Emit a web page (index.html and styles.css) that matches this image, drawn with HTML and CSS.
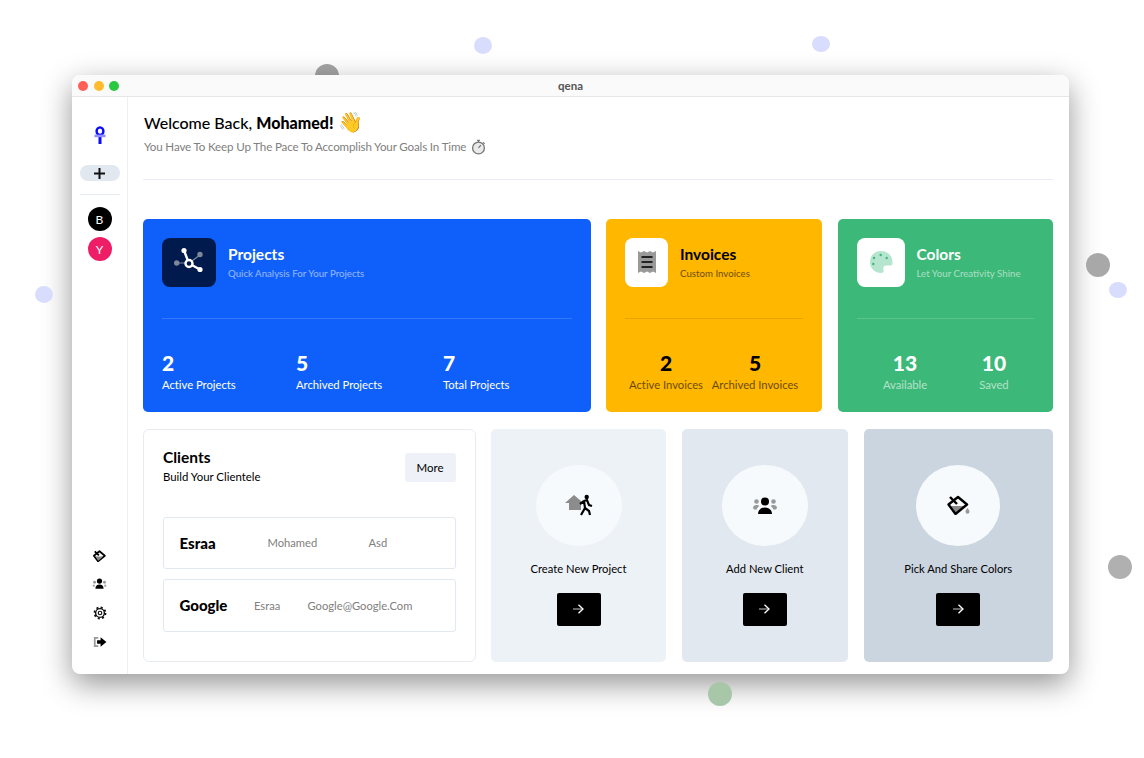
FILE: index.html
```html
<!DOCTYPE html>
<html lang="en">
<head>
<meta charset="UTF-8">
<meta name="viewport" content="width=device-width, initial-scale=1.0">
<title>qena</title>
<link rel="stylesheet" href="styles.css">
</head>
<body>
<!-- This one sits behind the window -->
<span class="dot d1"></span>

<div class="window">
  <div class="titlebar">
    <div class="lights"><i class="red"></i><i class="yellow"></i><i class="lime"></i></div>
    <div class="title">qena</div>
  </div>
  <div class="app">
    <!-- Sidebar -->
    <aside class="sidebar">
      <svg class="logo" width="12" height="18" viewBox="0 0 12 18"><ellipse cx="6" cy="5.2" rx="3.4" ry="3.8" fill="none" stroke="#0a0aff" stroke-width="2.4"/><rect x="4.5" y="9" width="3" height="9" fill="#0a0aff"/><rect x=".5" y="8.6" width="11" height="2.6" fill="#8f8fff"/></svg>
      <button class="add-btn"><svg width="11" height="11" viewBox="0 0 11 11"><path d="M0 5.5h11M5.5 0v11" stroke="#111" stroke-width="2"/></svg></button>
      <div class="side-line"></div>
      <div class="avatar black">B</div>
      <div class="avatar pink">Y</div>
      <div class="side-icons">
        <svg width="13" height="12" viewBox="0 0 22 20"><path d="M11 2l9 7.500L8.500 19 1.500 9.500z" fill="none" stroke="#000" stroke-width="3" stroke-linejoin="round"/><path d="M4 11h13l-8 7z" fill="#888"/><path d="M3 2l7 7" stroke="#000" stroke-width="3"/></svg>
        <svg width="15" height="14" viewBox="0 0 24 24"><circle cx="12" cy="7" r="4.5"/><path d="M5 20c0-5 3-7 7-7s7 2 7 7z"/><circle cx="3.500" cy="9" r="2.500" fill="#999"/><circle cx="20.500" cy="9" r="2.500" fill="#999"/><path d="M0 16c0-2 2-3 3.500-3v4zM24 16c0-2-2-3-3.500-3v4z" fill="#999"/></svg>
        <svg width="14" height="14" viewBox="0 0 24 24"><circle cx="12" cy="12" r="7.500" fill="none" stroke="#111" stroke-width="2.400"/><circle cx="12" cy="12" r="9.500" fill="none" stroke="#111" stroke-width="3" stroke-dasharray="3.500 3.960"/><circle cx="12" cy="12" r="3" fill="none" stroke="#111" stroke-width="2"/></svg>
        <svg width="14" height="14" viewBox="0 0 24 24"><path d="M9 5H3v14h6" fill="none" stroke="#999" stroke-width="3"/><path d="M13 4l10 8-10 8v-5H7V9h6z"/></svg>
      </div>
    </aside>

    <main class="content">
      <header class="welcome">
        <h1>Welcome Back, <b>Mohamed!</b> <span class="wave">👋</span></h1>
        <p>You Have To Keep Up The Pace To Accomplish Your Goals In Time
          <svg class="timer" width="15" height="16" viewBox="0 0 16 17"><circle cx="8" cy="9.5" r="6.3" fill="#eaeaea" stroke="#777" stroke-width="1.400"/><path d="M8 9.500l2.500-3M6.500 1.500h3M8 1.500v2M13 3.500l1.500 1.500" stroke="#777" stroke-width="1.300" fill="none"/></svg>
        </p>
      </header>

      <!-- Stat cards -->
      <section class="stats">
        <div class="card blue">
          <div class="card-head">
            <div class="icon-box navy">
              <svg width="32" height="32" viewBox="0 0 32 32"><circle cx="3.700" cy="17" r="2.700" fill="#7f8799"/><circle cx="27" cy="8.500" r="2.700" fill="#7f8799"/><path d="M4 17h12M16 17l11-8" stroke="#7f8799" stroke-width="1.200"/><path d="M11 4.500l5 13 11 6" stroke="#fff" stroke-width="2.400" fill="none"/><circle cx="11" cy="4.500" r="2.600" fill="#fff"/><circle cx="27" cy="23.500" r="2.600" fill="#fff"/><circle cx="16" cy="17.500" r="3.500" fill="#001a4d" stroke="#fff" stroke-width="2.400"/></svg>
            </div>
            <div><h3>Projects</h3><p>Quick Analysis For Your Projects</p></div>
          </div>
          <div class="card-rule"></div>
          <div class="card-nums">
            <div class="num n1"><strong>2</strong><span>Active Projects</span></div>
            <div class="num n2"><strong>5</strong><span>Archived Projects</span></div>
            <div class="num"><strong>7</strong><span>Total Projects</span></div>
          </div>
        </div>
        <div class="card yellow">
          <div class="card-head">
            <div class="icon-box white sm">
              <svg width="18" height="24" viewBox="0 0 18 24"><path d="M0 1l3 1.500L6 1l3 1.500L12 1l3 1.500L18 1v22l-3-1.500-3 1.500-3-1.500L6 23l-3-1.500L0 23z" fill="#999"/><path d="M3.500 7h11M3.500 12h11M3.500 17h11" stroke="#222" stroke-width="2"/></svg>
            </div>
            <div><h3>Invoices</h3><p>Custom Invoices</p></div>
          </div>
          <div class="card-rule"></div>
          <div class="card-nums pair">
            <div class="num"><strong>2</strong><span>Active Invoices</span></div>
            <div class="num"><strong>5</strong><span>Archived Invoices</span></div>
          </div>
        </div>
        <div class="card emerald">
          <div class="card-head">
            <div class="icon-box white md">
              <svg width="24" height="24" viewBox="0 0 24 24"><path d="M12 1C5.500 1 1 5.500 1 12s5 11 11 11c2.500 0 3-1.500 2.500-3-.8-2.500.2-4.500 3-4.500H22c1 0 1.500-1 1.500-3C23.500 5 18 1 12 1z" fill="#b5e5cf"/><circle cx="5" cy="8" r="1.200" fill="#3cb878"/><circle cx="11.700" cy="5" r="1.200" fill="#3cb878"/><circle cx="17.700" cy="8" r="1.200" fill="#3cb878"/><circle cx="4.300" cy="14" r="1.200" fill="#3cb878"/></svg>
            </div>
            <div><h3>Colors</h3><p>Let Your Creativity Shine</p></div>
          </div>
          <div class="card-rule"></div>
          <div class="card-nums pair">
            <div class="num"><strong>13</strong><span>Available</span></div>
            <div class="num"><strong>10</strong><span>Saved</span></div>
          </div>
        </div>
      </section>

      <section class="lower">
        <div class="clients">
          <div class="clients-head">
            <div><h3>Clients</h3><p>Build Your Clientele</p></div>
            <button class="more">More</button>
          </div>
          <div class="client first"><b>Esraa</b><span class="c-mid">Mohamed</span><span>Asd</span></div>
          <div class="client"><b>Google</b><span class="c-mid">Esraa</span><span>Google@Google.Com</span></div>
        </div>

        <div class="action a1">
          <div class="circle"><svg width="28" height="22" viewBox="0 0 28 22"><path d="M0 9L9 1l7 6v9H4V9z" fill="#8c8c8c"/><circle cx="21.700" cy="3" r="2.200"/><path d="M19 7l3-1 2 5 3 1M19 7l-4 3M19 7l1 7-4 7M20 14l4 3 1 4" stroke="#000" stroke-width="2.200" fill="none"/></svg></div>
          <div class="action-label">Create New Project</div>
          <button class="go"><svg width="11" height="10" viewBox="0 0 11 10"><path d="M0 5h9" stroke="#999" stroke-width="1.300"/><path d="M5.500 .7L10 5 5.500 9.300" stroke="#fff" stroke-width="1.300" fill="none"/></svg></button>
        </div>
        <div class="action a2">
          <div class="circle"><svg width="24" height="17" viewBox="0 0 24 17"><circle cx="12" cy="4.500" r="4"/><path d="M5 17c0-4 3-6.500 7-6.500s7 2.500 7 6.500z"/><circle cx="3.500" cy="4.500" r="2.300" fill="#999"/><circle cx="20.500" cy="4.500" r="2.300" fill="#999"/><path d="M0 11c0-2 1.500-3 3.500-3 1.200 0 2.200.3 2.800 1-1.300.8-2 1.800-2.500 3.500H1zM24 11c0-2-1.500-3-3.500-3-1.200 0-2.200.3-2.800 1 1.300.8 2 1.800 2.500 3.500H23z" fill="#999"/></svg></div>
          <div class="action-label">Add New Client</div>
          <button class="go"><svg width="11" height="10" viewBox="0 0 11 10"><path d="M0 5h9" stroke="#999" stroke-width="1.300"/><path d="M5.500 .7L10 5 5.500 9.300" stroke="#fff" stroke-width="1.300" fill="none"/></svg></button>
        </div>
        <div class="action a3">
          <div class="circle"><svg width="23" height="20" viewBox="0 0 23 20"><path d="M4 11h14l-9 7.500z" fill="#888"/><path d="M11 2l9 7.500L8.500 19 1.500 9.500z" fill="none" stroke="#000" stroke-width="2.400" stroke-linejoin="round"/><path d="M3 2l7 7" stroke="#000" stroke-width="2.400"/><path d="M20.500 13c1.300 1.700 2 2.700 2 3.700a2 2 0 0 1-4 0c0-1 .7-2 2-3.700z" fill="#999"/></svg></div>
          <div class="action-label">Pick And Share Colors</div>
          <button class="go"><svg width="11" height="10" viewBox="0 0 11 10"><path d="M0 5h9" stroke="#999" stroke-width="1.300"/><path d="M5.500 .7L10 5 5.500 9.300" stroke="#fff" stroke-width="1.300" fill="none"/></svg></button>
        </div>
      </section>
    </main>
  </div>
</div>

<!-- Background dots, over the window shadow -->
<span class="dot d2"></span>
<span class="dot d3"></span>
<span class="dot d4"></span>
<span class="dot d5"></span>
<span class="dot d6"></span>
<span class="dot d7"></span>
<span class="dot d8"></span>
</body>
</html>
```

FILE: styles.css
```css
*{box-sizing:border-box;}
html,body{margin:0;padding:0;}
body{width:1144px;height:758px;overflow:hidden;background:#fff;font-family:Lato,"Noto Sans",sans-serif;color:#000;position:relative;}
h1,h3,p{margin:0;}
button{border:none;font-family:inherit;cursor:pointer;}

/* Background dots */
.dot{position:absolute;border-radius:50%;display:block;}
.d1{left:315px;top:64px;width:24px;height:24px;background:#a5a5a5;}
.d2{left:474px;top:37px;width:18px;height:17px;background:#d9ddfd;}
.d3{left:812px;top:36px;width:18px;height:16px;background:#d9ddfd;}
.d4{left:35px;top:286px;width:18px;height:17px;background:#d9ddfd;}
.d5{left:1086px;top:253px;width:24px;height:24px;background:#a8a8a8;}
.d6{left:1109px;top:282px;width:18px;height:16px;background:#d9ddfd;}
.d7{left:1108px;top:555px;width:24px;height:24px;background:#b0b0b0;}
.d8{left:708px;top:682px;width:24px;height:24px;background:#a8c6a8;}

/* Window */
.window{position:absolute;left:72px;top:75px;width:997px;height:599px;background:#fff;border-radius:8px;overflow:hidden;box-shadow:0 10px 30px rgba(0,0,0,.42);}
.titlebar{height:22px;background:#fafafa;border-bottom:1px solid #e6e6e6;display:flex;align-items:center;justify-content:center;position:relative;}
.lights{position:absolute;left:6px;top:5.5px;display:flex;gap:5.5px;}
.lights i{width:10px;height:10px;border-radius:50%;display:block;}
.red{background:#ff5f57;}.yellow{background:#febc2e;}.lime{background:#28c840;}
.title{font-size:11.5px;font-weight:700;color:#555;margin-top:-1px;}
.app{display:flex;height:577px;}

/* Sidebar */
.sidebar{width:56px;border-right:1px solid #eef0f5;display:flex;flex-direction:column;align-items:center;padding-top:29px;}
.logo{display:block;}
.add-btn{width:40px;height:16px;margin-top:21px;border-radius:8px;background:#e2e8f0;display:flex;align-items:center;justify-content:center;padding:0;}
.side-line{width:40px;height:1px;background:#e7ebf2;margin:13px 0 12px;}
.avatar{width:24px;height:24px;border-radius:50%;color:#fff;font-size:12px;display:flex;align-items:center;justify-content:center;margin-bottom:6px;}
.avatar.black{background:#000;}
.avatar.pink{background:#ed1e65;}
.side-icons{margin-top:auto;margin-bottom:25px;display:flex;flex-direction:column;align-items:center;gap:15px;}
.side-icons svg{display:block;}

/* Content */
.content{flex:1;padding:14px 16px 12px 15px;}
.welcome{height:69px;border-bottom:1px solid #e9edf3;}
.welcome h1{font-size:16px;font-weight:500;line-height:24px;padding-left:1px;}
.welcome h1 b{font-weight:900;}
.wave{font-size:20px;line-height:20px;}
.welcome p{font-size:11.6px;letter-spacing:-.15px;color:#808080;margin-top:3px;line-height:18px;display:flex;align-items:center;gap:5px;padding-left:1px;}
.timer{display:block;}

.stats{display:flex;gap:15.5px;margin-top:39px;}
.card{height:193px;border-radius:5px;padding:18.5px 19px 0;color:#fff;width:216px;}
.card.blue{width:447.5px;background:#0f5ffb;}
.card.yellow{background:#ffb700;color:#000;}
.card.emerald{width:215.5px;background:#3cb878;}
.card-head{display:flex;gap:12px;align-items:center;height:49px;}
.icon-box{width:54px;height:49px;border-radius:8px;display:flex;align-items:center;justify-content:center;flex:none;}
.icon-box.navy{background:#001a4d;}
.icon-box.white{background:#fff;}
.icon-box.sm{width:43px;}
.icon-box.md{width:48px;}
.card h3{font-size:15.5px;font-weight:700;line-height:20px;}
.card-head p{font-size:9.7px;margin-top:2px;line-height:14px;opacity:.55;}
.card.yellow .card-head p{opacity:.6;}
.card-rule{height:1px;background:rgba(255,255,255,.16);margin-top:31px;}
.card.yellow .card-rule{background:rgba(0,0,0,.1);}
.card-nums{display:flex;margin-top:31px;}
.card-nums.pair{display:grid;grid-template-columns:89px 89px;}
.card.yellow .pair{margin-left:-3.5px;}
.card.emerald .pair{margin-left:4px;}
.pair .num{text-align:center;white-space:nowrap;}
.num strong{display:block;font-size:21px;font-weight:900;line-height:26px;}
.num span{display:block;font-size:11.3px;letter-spacing:-.03px;line-height:18px;}
.pair .num span{opacity:.6;}
.num.n1{width:134px;}
.num.n2{width:147px;}

/* Lower row */
.lower{display:flex;gap:15.5px;margin-top:16.5px;}
.clients{width:332.5px;height:233px;border:1px solid #e8ecf2;border-radius:6px;padding:18px 19px 0;}
.clients-head{display:flex;justify-content:space-between;align-items:flex-start;}
.clients-head h3{font-size:15.5px;font-weight:700;line-height:19px;}
.clients-head p{font-size:11.4px;line-height:18px;margin-top:1px;}
.more{width:51px;height:29px;background:#eef2f8;border-radius:3px;font-size:11.5px;color:#000;margin-top:5px;}
.client{height:52.5px;border:1px solid #e2e8f0;border-radius:3px;display:flex;align-items:center;padding:0 15.5px;font-size:11.2px;color:#808080;margin-top:10px;}
.client.first{margin-top:31px;}
.client b{font-size:15px;font-weight:900;color:#000;width:74.5px;}
.client .c-mid{width:53.5px;}
.client.first b{width:88px;}
.client.first .c-mid{width:101px;}

.action{height:233px;border-radius:5px;display:flex;flex-direction:column;align-items:center;padding-top:36px;}
.action.a1{width:175px;background:#edf2f7;}
.action.a2{width:166.5px;background:#e2e8f0;}
.action.a3{width:189.5px;background:#cbd5e0;}
.circle{width:86px;height:81px;border-radius:50%;background:#f7fafc;display:flex;align-items:center;justify-content:center;}
.a3 .circle{width:84px;}
.action-label{font-size:11.2px;line-height:18px;margin-top:14px;}
.go{width:44px;height:33px;background:#000;border-radius:2px;margin-top:15px;display:flex;align-items:center;justify-content:center;padding:0;}
```
